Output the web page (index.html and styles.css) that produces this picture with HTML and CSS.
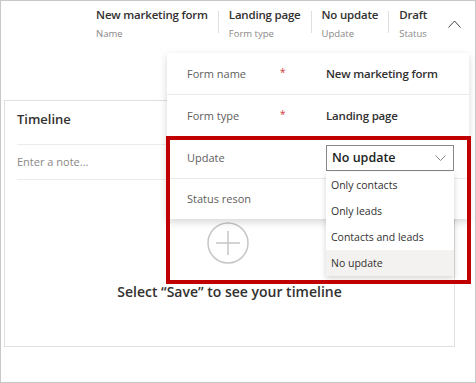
FILE: index.html
```html
<!DOCTYPE html>
<html lang="en">
<head>
  <meta charset="UTF-8">
  <title>New marketing form</title>
  <link rel="stylesheet" href="styles.css">
</head>
<body>
  <div class="frame">
    <!-- Header summary -->
    <div class="header">
      <div class="field">
        <div class="field-value">New marketing form</div>
        <div class="field-label">Name</div>
      </div>
      <div class="sep"></div>
      <div class="field">
        <div class="field-value">Landing page</div>
        <div class="field-label">Form type</div>
      </div>
      <div class="sep"></div>
      <div class="field">
        <div class="field-value">No update</div>
        <div class="field-label">Update</div>
      </div>
      <div class="sep"></div>
      <div class="field">
        <div class="field-value">Draft</div>
        <div class="field-label">Status</div>
      </div>
      <svg class="chevron-up" width="13" height="8" viewBox="0 0 13 8">
        <path d="M0.5 7.5 L6.5 1 L12.5 7.5" fill="none" stroke="#444" stroke-width="1"/>
      </svg>
    </div>

    <div class="content">
      <!-- Timeline card -->
      <div class="timeline">
        <div class="timeline-title">Timeline</div>
        <div class="note">Enter a note...</div>
        <div class="empty">
          <svg class="plus" width="42" height="42" viewBox="0 0 42 42">
            <circle cx="21" cy="21" r="20" fill="#fff" stroke="#c8c6c4" stroke-width="1.5"/>
            <path d="M21 9 V33 M9 21 H33" stroke="#c8c6c4" stroke-width="1.5"/>
          </svg>
          <div class="empty-text">Select “Save” to see your timeline</div>
        </div>
      </div>

      <!-- Flyout panel -->
      <div class="flyout">
        <div class="row">
          <div class="row-label">Form name</div>
          <div class="req">*</div>
          <div class="row-value">New marketing form</div>
        </div>
        <div class="row">
          <div class="row-label">Form type</div>
          <div class="req">*</div>
          <div class="row-value">Landing page</div>
        </div>
        <div class="row">
          <div class="row-label">Update</div>
          <div class="req"></div>
          <div class="select-wrap">
            <div class="select">
              <span>No update</span>
              <svg width="11" height="6" viewBox="0 0 11 6">
                <path d="M0.5 0.5 L5.5 5.5 L10.5 0.5" fill="none" stroke="#8a8886" stroke-width="1"/>
              </svg>
            </div>
            <ul class="options">
              <li>Only contacts</li>
              <li>Only leads</li>
              <li>Contacts and leads</li>
              <li class="selected">No update</li>
            </ul>
          </div>
        </div>
        <div class="row">
          <div class="row-label">Status reson</div>
        </div>
      </div>

      <div class="highlight"></div>
    </div>
  </div>
</body>
</html>
```

FILE: styles.css
```css
/* Cadre général */
body {
  margin: 0;
  font-family: "Open Sans", "Noto Sans", sans-serif;
  color: #323130;
  background: #fff;
}

.frame {
  width: 476px;
  height: 383px;
  box-sizing: border-box;
  border: 1px solid #c8c8c8;
  position: relative;
  overflow: hidden;
}

/* En-tête */
.header {
  display: flex;
  justify-content: flex-end;
  align-items: flex-start;
  padding: 6px 13px 0 0;
  height: 44px;
  box-sizing: border-box;
}

.field-value {
  font-size: 11.5px;
  font-weight: 600;
  line-height: 15px;
  letter-spacing: -0.2px;
  color: #323130;
  white-space: nowrap;
}

.field-label {
  font-size: 9.5px;
  line-height: 13px;
  margin-top: 5px;
  color: #8a8886;
}

.sep {
  width: 1px;
  height: 22px;
  background: #e1dfdd;
  margin: 4px 10px 0 10px;
}

.chevron-up {
  margin: 13px 1px 0 21px;
}

/* Contenu */
.content {
  position: relative;
  height: 337px;
  padding-top: 55px;
  box-sizing: border-box;
}

.timeline {
  margin-left: 3px;
  width: 451px;
  height: 247px;
  box-sizing: border-box;
  border: 1px solid #e1dfdd;
  padding: 0 12px;
}

.timeline-title {
  font-size: 13px;
  font-weight: 600;
  line-height: 18px;
  padding: 9px 0 16px 0;
  border-bottom: 1px solid #edebe9;
}

.note {
  font-size: 11px;
  color: #8a8886;
  line-height: 34px;
  border-bottom: 1px solid #edebe9;
}

.empty {
  display: flex;
  flex-direction: column;
  align-items: center;
  padding-top: 42px;
}

.plus {
  margin-right: 3px;
}

.empty-text {
  margin-top: 18px;
  font-size: 14px;
  font-weight: 600;
  color: #323130;
}

/* Panneau déroulant */
.flyout {
  position: absolute;
  left: 166px;
  top: 8px;
  width: 302px;
  background: #fff;
  box-shadow: 0 3px 8px rgba(0, 0, 0, 0.16);
}

.row {
  display: flex;
  align-items: center;
  height: 42px;
  padding-left: 20px;
  border-bottom: 1px solid #edebe9;
  box-sizing: border-box;
  font-size: 11px;
}

.row:last-child {
  border-bottom: none;
  height: 40px;
  padding-bottom: 2px;
}

.row-label {
  width: 93px;
  color: #605e5c;
}

.req {
  width: 46px;
  color: #d13438;
  font-size: 10px;
  align-self: flex-start;
  margin-top: 12px;
}

.row-value {
  font-weight: 600;
  font-size: 11.5px;
  letter-spacing: -0.2px;
  color: #323130;
}

.select-wrap {
  position: relative;
}

.select {
  width: 128px;
  height: 26px;
  box-sizing: border-box;
  border: 1px solid #8a8886;
  display: flex;
  align-items: center;
  justify-content: space-between;
  padding: 0 7px 0 5px;
  font-size: 12.5px;
  font-weight: 600;
  color: #201f1e;
}

.options {
  position: absolute;
  left: 0;
  top: 27px;
  width: 128px;
  margin: 0;
  padding: 0;
  list-style: none;
  background: #fff;
  box-shadow: 0 2px 6px rgba(0, 0, 0, 0.18);
  z-index: 2;
}

.options li {
  height: 26px;
  line-height: 26px;
  padding-left: 5px;
  font-size: 10.5px;
  color: #323130;
}

.options li.selected {
  background: #f3f2f1;
}

/* Encadré rouge */
.highlight {
  position: absolute;
  left: 165px;
  top: 91px;
  width: 305px;
  height: 148px;
  box-sizing: border-box;
  border: 4px solid #c00000;
  z-index: 3;
}
```
